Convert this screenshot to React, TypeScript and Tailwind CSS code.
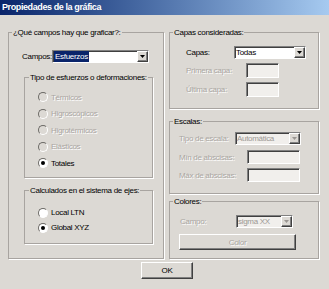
import React from 'react';

const face = 'bg-[#dcd9d4]';
const sunken = 'border border-t-[#808080] border-l-[#808080] border-b-white border-r-white shadow-[inset_1px_1px_0_#404040]';
const raised = 'border border-t-white border-l-white border-b-[#404040] border-r-[#404040] shadow-[inset_-1px_-1px_0_#808080]';
const group = 'border border-[#a8a4a0] shadow-[1px_1px_0_#fff]';
const off = 'text-[#aaa6a2] [text-shadow:1px_1px_0_#fff]';

function Arrow({ disabled }: { disabled?: boolean }) {
  return (
    <div className={`w-[11px] h-full ${face} ${raised} flex items-center justify-center`}>
      <svg width="5" height="3" viewBox="0 0 5 3">
        <path d="M0 0h5L2.5 3z" fill={disabled ? '#9a9692' : '#000'} />
      </svg>
    </div>
  );
}

function Select({ value, w, disabled, selected }: { value: string; w: string; disabled?: boolean; selected?: boolean }) {
  return (
    <div className={`${w} h-[13px] ${sunken} ${disabled ? 'bg-[#f1efec]' : 'bg-white'} flex items-stretch`}>
      <div className="flex-1 flex items-center pl-[1px] overflow-hidden">
        <span className={selected ? 'bg-[#0a246a] text-white px-[1px] leading-[11px]' : disabled ? 'text-[#9c9894]' : 'text-black'}>
          {value}
        </span>
      </div>
      <Arrow disabled={disabled} />
    </div>
  );
}

function Input({ w, h }: { w: string; h: string }) {
  return <div className={`${w} ${h} ${sunken} bg-[#f1efec]`} />;
}

function Radio({ label, checked, disabled, h }: { label: string; checked?: boolean; disabled?: boolean; h: string }) {
  return (
    <div className={`flex items-center ${h} ml-[13px]`}>
      <div className={`w-[10px] h-[10px] rounded-full border border-t-[#6c6a66] border-l-[#6c6a66] border-b-white border-r-white ${disabled ? face : 'bg-white'} flex items-center justify-center`}>
        {checked && <div className="w-[4px] h-[4px] rounded-full bg-black" />}
      </div>
      <span className={`ml-[3px] ${disabled ? off : 'text-black'}`}>{label}</span>
    </div>
  );
}

export default function App() {
  return (
    <div className={`w-[329px] h-[289px] ${face} overflow-hidden text-[8px] leading-[11px] tracking-[-0.3px] text-black`} style={{ fontFamily: '"Liberation Sans", Arial, sans-serif' }}>
      <div className="h-[15px] bg-gradient-to-r from-[#0a246a] to-[#a6caf0] flex items-center pl-[2px]">
        <span className="text-white font-bold text-[9px] tracking-[-0.4px]">Propiedades de la gráfica</span>
      </div>

      <div className="flex pt-[11px]">
        {/* left column */}
        <fieldset className={`ml-[8px] w-[156px] h-[233px] ${group}`}>
          <legend className="ml-[3px] px-[1px] leading-[13px]">¿Qué campos hay que graficar?:</legend>
          <div className="flex items-center mt-[10px] pl-[13px] h-[14px]">
            <span className="w-[30px]">Campos:</span>
            <Select value="Esfuerzos" w="w-[97px]" selected />
          </div>

          <fieldset className={`ml-[15px] mt-[8px] w-[129px] h-[107px] ${group}`}>
            <legend className="ml-[4px] px-[1px] leading-[13px]">Tipo de esfuerzos o deformaciones:</legend>
            <div className="mt-[5px]">
              <Radio label="Térmicos" disabled h="h-[16.5px]" />
              <Radio label="Higroscópicos" disabled h="h-[16.5px]" />
              <Radio label="Higrotérmicos" disabled h="h-[16.5px]" />
              <Radio label="Elásticos" disabled h="h-[16.5px]" />
              <Radio label="Totales" checked h="h-[16.5px]" />
            </div>
          </fieldset>

          <fieldset className={`ml-[15px] mt-[6px] w-[129px] h-[60px] ${group}`}>
            <legend className="ml-[4px] px-[1px] leading-[13px]">Calculados en el sistema de ejes:</legend>
            <div className="mt-[8px]">
              <Radio label="Local LTN" h="h-[15px]" />
              <Radio label="Global XYZ" checked h="h-[15px]" />
            </div>
          </fieldset>
        </fieldset>

        {/* right column */}
        <div className="ml-[5px] w-[150px] flex flex-col">
          <fieldset className={`h-[83px] ${group}`}>
            <legend className="ml-[3px] px-[1px] leading-[13px]">Capas consideradas:</legend>
            <div className="flex items-center mt-[7px] h-[13px] pl-[16px]">
              <span className="w-[48px]">Capas:</span>
              <Select value="Todas" w="w-[72px]" />
            </div>
            <div className="flex items-center mt-[4px] pl-[16px]">
              <span className={`w-[60px] ${off}`}>Primera capa:</span>
              <Input w="w-[33px]" h="h-[15px]" />
            </div>
            <div className="flex items-center mt-[4px] pl-[16px]">
              <span className={`w-[60px] ${off}`}>Última capa:</span>
              <Input w="w-[33px]" h="h-[15px]" />
            </div>
          </fieldset>

          <fieldset className={`mt-[6px] h-[79px] ${group}`}>
            <legend className="ml-[3px] px-[1px] leading-[13px]">Escalas:</legend>
            <div className="flex items-center mt-[4px] h-[13px] pl-[9px]">
              <span className={`w-[56px] ${off}`}>Tipo de escala:</span>
              <Select value="Automática" w="w-[66px]" disabled />
            </div>
            <div className="flex items-center mt-[5px] pl-[9px]">
              <span className={`w-[68px] ${off}`}>Mín de abscisas:</span>
              <Input w="w-[53px]" h="h-[14px]" />
            </div>
            <div className="flex items-center mt-[4px] pl-[9px]">
              <span className={`w-[68px] ${off}`}>Máx de abscisas:</span>
              <Input w="w-[53px]" h="h-[14px]" />
            </div>
          </fieldset>

          <fieldset className={`mt-[1px] h-[64px] ${group}`}>
            <legend className="ml-[3px] px-[1px] leading-[13px]">Colores:</legend>
            <div className="flex items-center mt-[7px] h-[13px] pl-[10px]">
              <span className={`w-[56px] ${off}`}>Campo:</span>
              <Select value="sigma XX" w="w-[57px]" disabled />
            </div>
            <div className="mt-[6px] pl-[9px]">
              <div className={`w-[117px] h-[16px] ${face} ${raised} flex items-center justify-center ${off}`}>Color</div>
            </div>
          </fieldset>
        </div>
      </div>

      <div className={`ml-[141px] mt-[3px] w-[52px] h-[17px] ${face} ${raised} flex items-center justify-center`}>OK</div>
    </div>
  );
}
